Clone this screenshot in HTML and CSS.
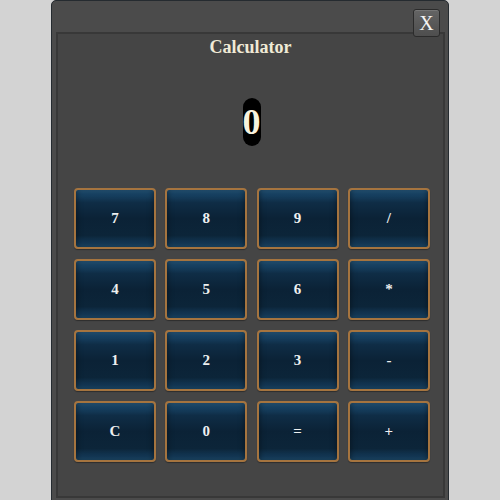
FILE: index.html
```html
<!DOCTYPE html>
<html>
<head>
<meta charset="utf-8">
<link rel="stylesheet" href="styles.css">
</head>
<body>
<div class="window">
  <button class="close">X</button>
  <div class="panel">
    <div class="title">Calculator</div>
    <div class="display"><span class="value">0</span></div>
    <div class="keys">
      <button class="key">7</button>
      <button class="key">8</button>
      <button class="key">9</button>
      <button class="key">/</button>
      <button class="key">4</button>
      <button class="key">5</button>
      <button class="key">6</button>
      <button class="key">*</button>
      <button class="key">1</button>
      <button class="key">2</button>
      <button class="key">3</button>
      <button class="key">-</button>
      <button class="key">C</button>
      <button class="key">0</button>
      <button class="key">=</button>
      <button class="key">+</button>
    </div>
  </div>
</div>
</body>
</html>
```
FILE: styles.css
```css
html, body {
  margin: 0;
  padding: 0;
  background: #d3d3d3;
  height: 500px;
  overflow: hidden;
}
body {
  font-family: "Liberation Serif", "DejaVu Serif", serif;
}
.window {
  position: relative;
  box-sizing: border-box;
  margin-left: 51px;
  width: 398px;
  height: 520px;
  background: #4b4b4b;
  border: 1px solid #252b30;
  border-radius: 5px 5px 0 0;
  padding: 31px 3px 0 4px;
}
.close {
  position: absolute;
  top: 8px;
  right: 8px;
  width: 27px;
  height: 28px;
  box-sizing: border-box;
  border: 1px solid #2b2b2b;
  border-radius: 3px;
  background: linear-gradient(#646464, #4e4e4e);
  color: #f4f4f4;
  font-family: "Liberation Serif", serif;
  font-size: 20px;
  line-height: 24px;
  padding: 0;
  box-shadow: inset 0 1px 0 rgba(255,255,255,0.12);
}
.panel {
  box-sizing: border-box;
  height: 466px;
  border: 2px solid #383838;
  background: #454545;
  padding: 2px 0 0 16px;
}
.title {
  text-align: center;
  padding-right: 16px;
  font-weight: bold;
  font-size: 18px;
  line-height: 22px;
  color: #f0ead6;
}
.display {
  margin-top: 40px;
  text-align: center;
  padding-right: 14px;
  height: 48px;
}
.value {
  display: inline-block;
  background: #000;
  border-radius: 9px;
  font-weight: bold;
  font-size: 36px;
  line-height: 48px;
  color: #f7f2de;
}
.keys {
  margin-top: 42px;
  display: grid;
  grid-template-columns: repeat(4, 82px);
  grid-auto-rows: 61px;
  column-gap: 9.3px;
  row-gap: 10px;
}
.key {
  box-sizing: border-box;
  border: 2px solid #a5743f;
  border-radius: 4px;
  background: linear-gradient(to bottom, #2a5f86 0%, #184466 7%, #0f2d46 22%, #0b2236 50%, #0c2539 80%, #133856 93%, #1f5073 100%);
  box-shadow: inset 0 0 6px rgba(0,0,0,0.5), 0 1px 1px rgba(0,0,0,0.35);
  color: #eef0f0;
  font-family: "Liberation Serif", serif;
  font-weight: bold;
  font-size: 15px;
  padding: 0;
}
```
